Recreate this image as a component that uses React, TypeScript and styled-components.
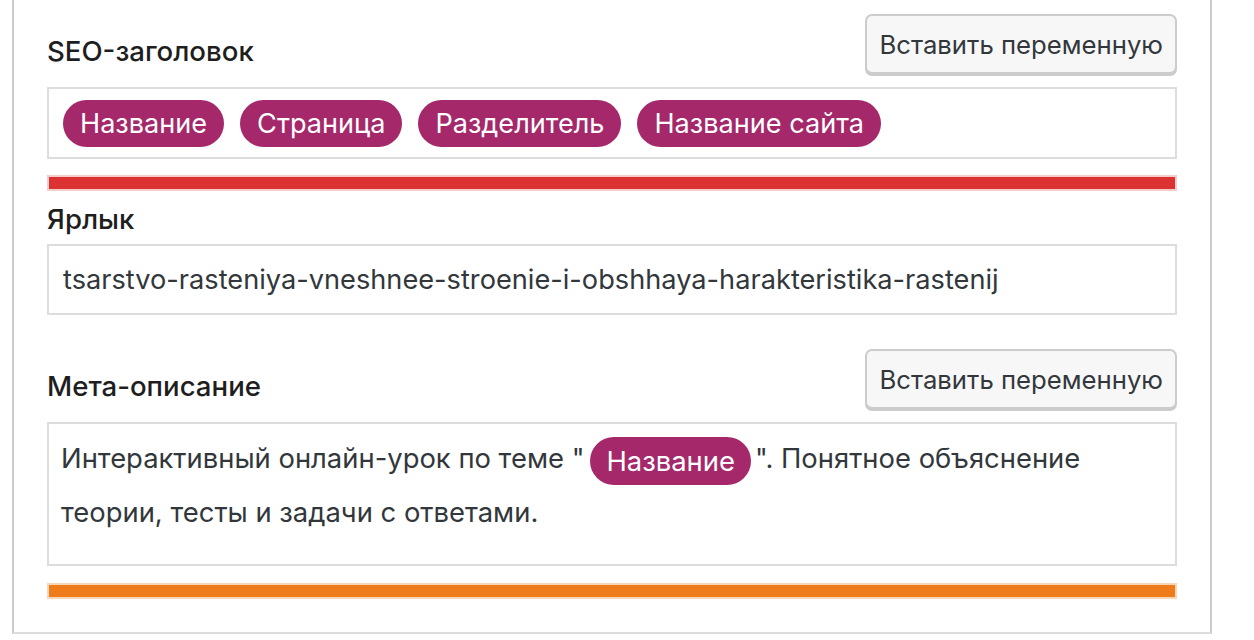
import React from 'react'
import styled, { createGlobalStyle } from 'styled-components'

const GlobalStyle = createGlobalStyle`
  html, body {
    margin: 0;
    padding: 0;
    background: #fff;
    font-family: Inter, "Noto Sans", sans-serif;
    color: #1e1e1e;
  }
`

const Page = styled.div`
  padding-left: 12px;
  width: 1200px;
`

const Panel = styled.div`
  border-left: 2px solid #ccc;
  border-right: 2px solid #ccc;
  border-bottom: 2px solid #ddd;
  padding: 0 33px 33px 33px;
`

const HeaderRow = styled.div<{ $top: number }>`
  display: flex;
  justify-content: space-between;
  align-items: flex-end;
  padding-top: ${(p) => p.$top}px;
`

const Label = styled.div<{ $top?: number }>`
  font-size: 27.6px;
  font-weight: 500;
  line-height: 30px;
  color: #1e1e1e;
  margin-top: ${(p) => p.$top ?? 0}px;
  margin-bottom: 8px;
`

const InsertButton = styled.button`
  height: 60px;
  padding: 0 12px;
  background: #f7f7f7;
  border: 2px solid #ccc;
  border-radius: 7px;
  box-shadow: 0 2px 0 #ccc;
  font-family: inherit;
  font-size: 25.7px;
  color: #32373c;
  cursor: pointer;
`

const TitleField = styled.div`
  margin-top: 13px;
  height: 72px;
  box-sizing: border-box;
  border: 2px solid #ddd;
  padding: 0 14px;
  display: flex;
  align-items: center;
  gap: 16px;
`

const Pill = styled.span`
  display: inline-flex;
  align-items: center;
  height: 47px;
  padding: 0 17px;
  border-radius: 24px;
  background: #a4286a;
  color: #fff;
  font-size: 27.1px;
  white-space: nowrap;
`

const InlinePill = styled(Pill)`
  vertical-align: middle;
  margin: 0 4px 0 6px;
  height: 48px;
  padding: 0 16px;
  font-size: 27.4px;
`

const Bar = styled.div<{ $color: string; $edge: string; $top: number }>`
  margin-top: ${(p) => p.$top}px;
  height: 16px;
  box-sizing: border-box;
  border: 2px solid ${(p) => p.$edge};
  background: ${(p) => p.$color};
`

const SlugField = styled.div`
  margin-top: 10px;
  height: 71px;
  box-sizing: border-box;
  border: 2px solid #ddd;
  padding: 0 14px;
  display: flex;
  align-items: center;
  font-size: 27.2px;
  color: #32373c;
`

const MetaField = styled.div`
  margin-top: 13px;
  height: 144px;
  box-sizing: border-box;
  border: 2px solid #ddd;
  padding: 7px 12px 8px;
  font-size: 27.4px;
  line-height: 54px;
  color: #32373c;
`

const variable = 'Вставить переменную'

export default function App() {
  return (
    <>
      <GlobalStyle />
      <Page>
        <Panel>
          <HeaderRow $top={14}>
            <Label>SEO-заголовок</Label>
            <InsertButton>{variable}</InsertButton>
          </HeaderRow>
          <TitleField>
            <Pill>Название</Pill>
            <Pill>Страница</Pill>
            <Pill>Разделитель</Pill>
            <Pill>Название сайта</Pill>
          </TitleField>
          <Bar $top={16} $color="#dc3232" $edge="#f3cccc" />

          <Label $top={13}>Ярлык</Label>
          <SlugField>
            tsarstvo-rasteniya-vneshnee-stroenie-i-obshhaya-harakteristika-rastenij
          </SlugField>

          <HeaderRow $top={34}>
            <Label>Мета-описание</Label>
            <InsertButton>{variable}</InsertButton>
          </HeaderRow>
          <MetaField>
            Интерактивный онлайн-урок по теме "<InlinePill>Название</InlinePill>". Понятное
            объяснение теории, тесты и задачи с ответами.
          </MetaField>
          <Bar $top={17} $color="#ee7c1b" $edge="#f8d7b8" />
        </Panel>
      </Page>
    </>
  )
}
